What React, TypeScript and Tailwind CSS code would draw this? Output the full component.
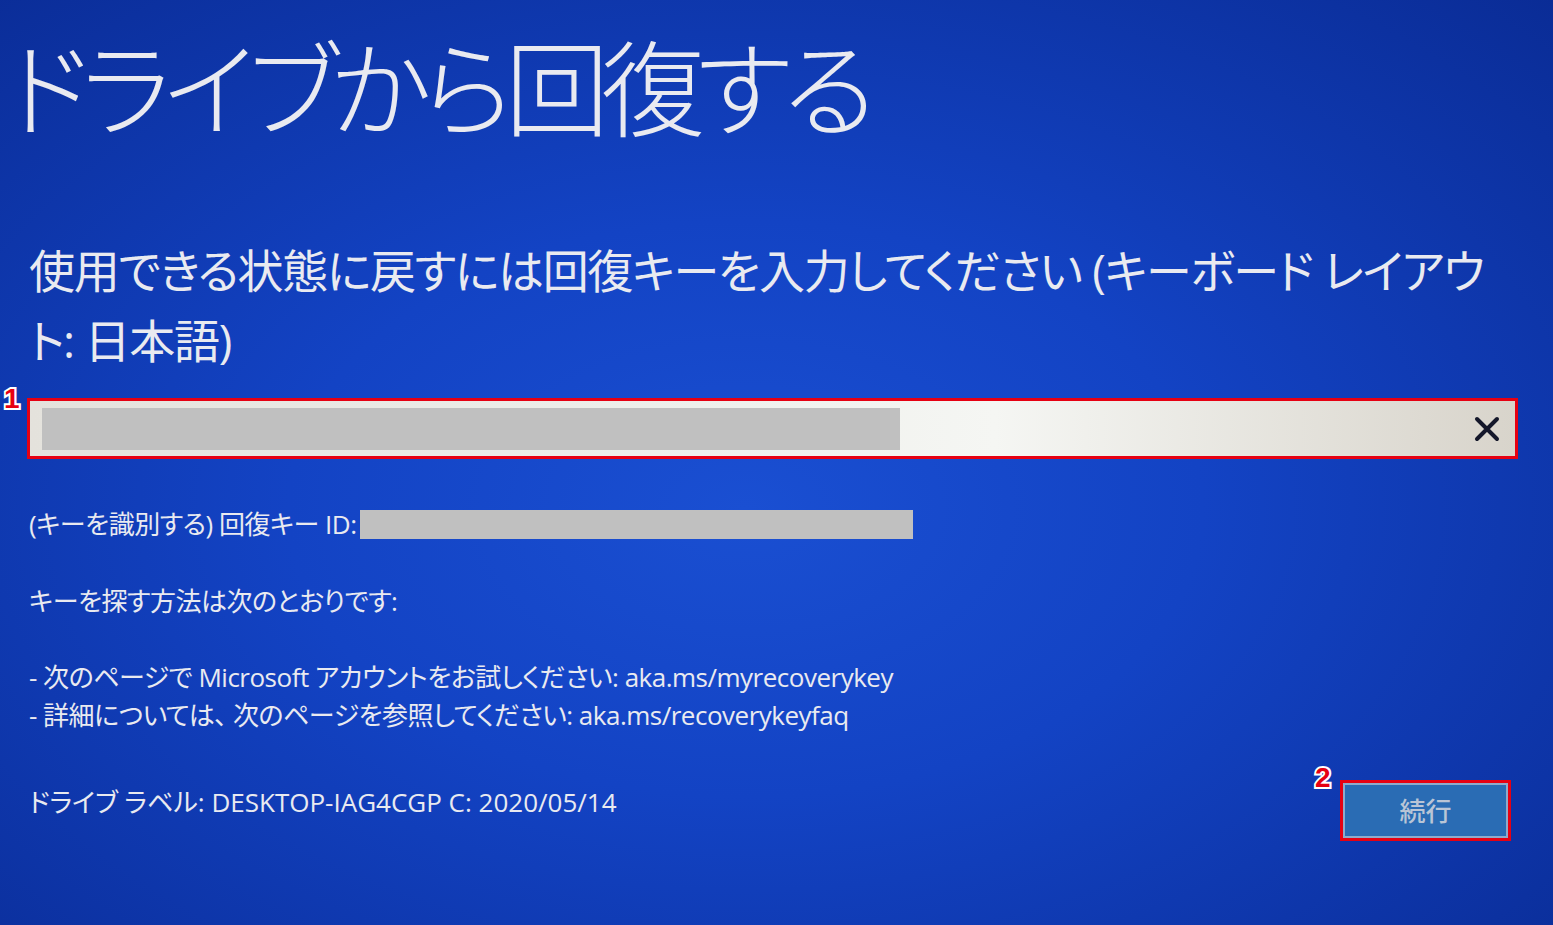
import React from "react";

// BitLocker recovery screen (ドライブから回復する)

const jp = "font-['Open_Sans','Noto_Sans_CJK_JP',sans-serif] [font-feature-settings:'palt']";

function Badge({ n, className }: { n: string; className: string }) {
  return (
    <span
      className={`absolute font-['Liberation_Sans',sans-serif] text-[28px] leading-none font-bold text-[#e60012] [-webkit-text-stroke:4px_white] [paint-order:stroke_fill] ${className}`}
    >
      {n}
    </span>
  );
}

export default function App() {
  return (
    <div
      className={`relative w-[1553px] h-[925px] overflow-hidden bg-[radial-gradient(ellipse_at_48%_55%,#1a4fd2_0%,#1343c4_40%,#0a2c96_100%)] pl-[29px] pr-[45px] text-[#e9eaf0] ${jp}`}
    >
      {/* title */}
      <h1 className="-ml-[22px] mt-[37px] text-[104px] leading-[104px] font-light tracking-[-8px] whitespace-nowrap">
        ドライブから回復する
      </h1>

      {/* prompt */}
      <p className="mt-[94px] text-[46px] leading-[70px] tracking-[-1.3px] whitespace-nowrap">
        使用できる状態に戻すには回復キーを入力してください (キーボード レイアウ
        <br />
        ト: 日本語)
      </p>

      {/* key input */}
      <div className="relative mt-[26px] ml-[1px] mr-[-7px]">
        <div className="flex items-center h-[55px] bg-[linear-gradient(90deg,#e4e2dc_0%,#eef0ec_45%,#f5f6f3_65%,#d8d4cb_100%)] pl-[12px] pr-[14px]">
          <div className="w-[858px] h-[42px] bg-[#c0c0c0]" />
          <div className="flex-1" />
          <svg width="28" height="28" viewBox="0 0 28 28" className="text-[#14172a]">
            <path d="M4 4 L24 24 M24 4 L4 24" stroke="currentColor" strokeWidth="4" strokeLinecap="round" />
          </svg>
        </div>
        <div className="absolute -inset-[3px] border-[3px] border-[#e60012] pointer-events-none" />
        <Badge n="1" className="-left-[26px] -top-[16px]" />
      </div>

      <div className="text-[26px] leading-[38px] tracking-[-0.5px]">
        {/* key id */}
        <div className="mt-[49px] flex items-center">
          <span>(キーを識別する) 回復キー ID:</span>
          <div className="ml-[3px] w-[553px] h-[29px] bg-[#c0c0c0]" />
        </div>

        <p className="mt-[39px]">キーを探す方法は次のとおりです:</p>

        <div className="mt-[38px]">
          <p>- 次のページで Microsoft アカウントをお試しください: aka.ms/myrecoverykey</p>
          <p>- 詳細については、 次のページを参照してください: aka.ms/recoverykeyfaq</p>
        </div>

        {/* footer row */}
        <div className="mt-[49px] flex items-start justify-between">
          <p className="tracking-[0px]">ドライブ ラベル: DESKTOP-IAG4CGP C: 2020/05/14</p>
          <div className="relative">
            <button className="w-[165px] h-[55px] bg-[#2a6cb4] border-2 border-[#8eaacb] font-medium tracking-normal text-[#b9c5d6]">
              続行
            </button>
            <div className="absolute -inset-[3px] border-[3px] border-[#e60012] pointer-events-none" />
            <Badge n="2" className="-left-[28px] -top-[19px]" />
          </div>
        </div>
      </div>
    </div>
  );
}
